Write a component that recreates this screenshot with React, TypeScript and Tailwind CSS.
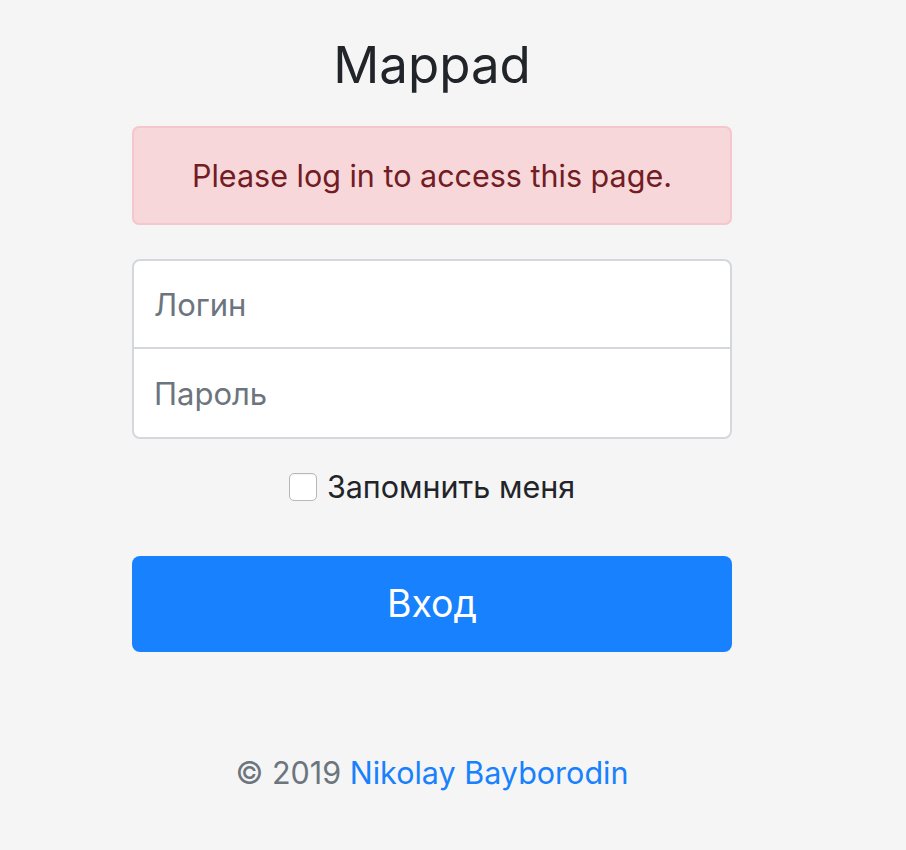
import React from 'react'

export default function App() {
  return (
    <div
      className="min-h-screen bg-[#f5f5f5] text-[#212529]"
      style={{ fontFamily: 'Inter, "Noto Sans", "Liberation Sans", sans-serif' }}
    >
      <div className="w-[600px] ml-[132px] pt-[31px]">
        <h1 className="text-center text-[51px] leading-[68px] font-normal">Mappad</h1>

        {/* alert */}
        <div className="mt-[27px] h-[99px] flex items-center justify-center bg-[#f8d7da] border-2 border-[#f5c6cb] rounded-[7px] text-[#721c24] text-[30.5px]">
          Please log in to access this page.
        </div>

        {/* login / password */}
        <div className="mt-[34px] bg-white border-2 border-[#d4d8dd] rounded-[8px] overflow-hidden">
          <input
            type="text"
            placeholder="Логин"
            className="block w-full h-[88px] px-[20px] text-[31px] outline-none placeholder:text-[#6c757d] border-b-2 border-[#d4d8dd]"
          />
          <input
            type="password"
            placeholder="Пароль"
            className="block w-full h-[88px] px-[20px] text-[31px] outline-none placeholder:text-[#6c757d]"
          />
        </div>

        <label className="mt-[26px] h-[44px] flex items-center justify-center gap-[10px] text-[30.5px]">
          <span className="w-[28px] h-[28px] rounded-[5px] border border-[#b8b8b8] bg-white shadow-[inset_0_1px_1px_rgba(0,0,0,0.05)]" />
          <span>Запомнить меня</span>
        </label>

        <button className="mt-[47px] w-full h-[96px] rounded-[8px] bg-[#1781fe] text-white text-[37.5px]">
          Вход
        </button>

        <p className="mt-[99px] h-[44px] leading-[44px] text-center text-[30.5px] text-[#6c757d]">
          © 2019 <a className="text-[#1781fe]">Nikolay Bayborodin</a>
        </p>
      </div>
    </div>
  )
}
